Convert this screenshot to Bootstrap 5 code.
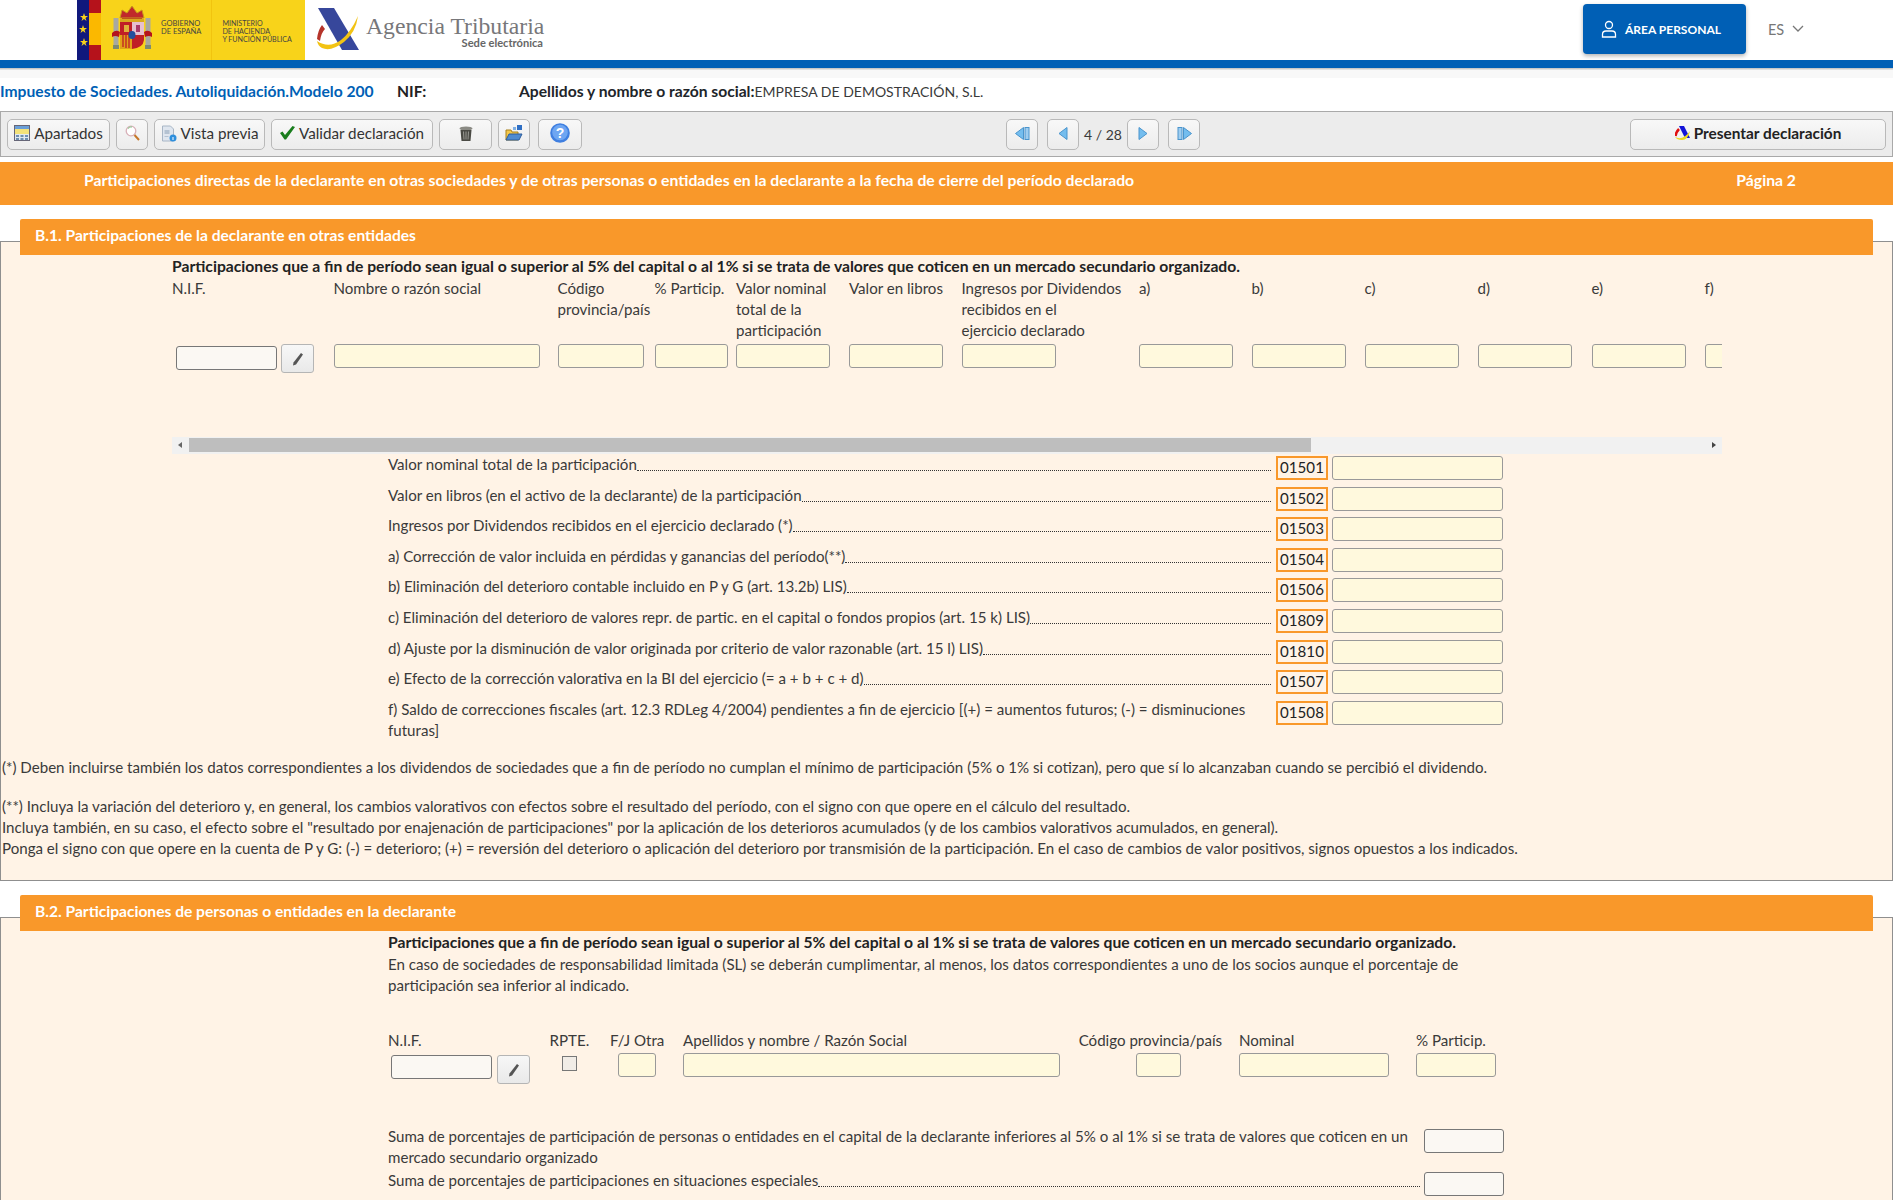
<!DOCTYPE html>
<html lang="es">
<head>
  <meta charset="UTF-8" />
  <title>Modelo 200</title>
  <link href="https://cdn.jsdelivr.net/npm/bootstrap@5.3.3/dist/css/bootstrap.min.css" rel="stylesheet">
  <style>
    html, body { overflow: hidden; }
    body { font-family: "Lato", "Liberation Sans", sans-serif; font-size: 15.1px; line-height: 21px; color: #3a3a3a; background: #fff; }
    .wrap { width: 1893px; height: 1200px; overflow: hidden; }

    .topbar { height: 60px; padding-left: 77px; }
    .gov-logo { width: 228px; height: 60px; background: #f8d31a; position: relative; }
    .gov-logo svg { flex: none; }
    .gov-txt { font-size: 7.5px; line-height: 8px; color: #444; padding-top: 20px; white-space: nowrap; flex: none; }
    .gov-esc { margin-left: 11px; margin-right: 9px; margin-top: 6px; }
    .gov-sep { border-left: 1px solid #f1c40f; padding-left: 10px; margin-left: 10px; }
    .gov-min { font-size: 7.1px; }
    .at-logo { margin: 8px 0 0 12px; }
    .at-txt { margin: 14px 0 0 7px; width: 178px; }
    .at-name { font-family: "Liberation Serif", serif; font-size: 23.7px; line-height: 24px; color: #77777a; white-space: nowrap; }
    .at-sede { font-size: 11.1px; line-height: 10px; font-weight: 700; color: #666; padding-right: 1px; }
    .btn-area { width: 163px; height: 50px; background: #005fb5; color: #fff; font-size: 12px; font-weight: 700; border-radius: 4px; box-shadow: 0 2px 4px rgba(0,0,0,.3); margin-top: 4px; padding-right: 7px; }
    .lang { font-size: 14.5px; color: #777; width: 147px; padding-left: 22px; }
    .blue-bar { height: 8px; background: #005fb5; }
    .shade { height: 10px; background: linear-gradient(#bbb, #f8f8f8 25%, #f8f8f8 100%); }

    .infobar { height: 33px; font-size: 15.65px; padding-bottom: 7px; }
    .tit-mod { color: #005fb5; font-weight: 700; width: 397px; white-space: nowrap; }
    .tit-nif { font-weight: 700; color: #222; width: 122px; }
    .tit-emp { font-size: 14px; }

    .toolb { height: 46px; background: #ececec; border: 1px solid #a9a9a9; padding: 0 6px; }
    .tb-btn { height: 31px; background: linear-gradient(#f8f8f8, #ececec); border: 1px solid #b9b9b9; border-radius: 5px; color: #333; font-size: 15.2px; white-space: nowrap; flex: none; padding-bottom: 2px; }
    .tb-apart { width: 103px; }
    .tb-sq { width: 32px; }
    .tb-vista { width: 111px; }
    .tb-valid { width: 162px; }
    .tb-del { width: 53px; }
    .tb-help { width: 44px; margin-left: 2px; }
    .tb-pre { width: 256px; color: #222; font-weight: 700; font-size: 15.4px; margin-left: auto; }
    .tb-count { width: 48px; font-size: 14px; }
    .gap-tb { gap: 6px; }
    .nav-pg { margin-left: 424px; }
    .nav-sep { margin-left: 9px; }

    .band { height: 43px; margin-top: 5px; background: #f9982a; color: #fff; font-weight: 700; font-size: 15.75px; padding: 0 97px 8px 84px; }
    .sec { position: relative; margin-top: 14px; }
    .sec-head { height: 36px; margin: 0 20px; background: #f9982a; color: #fff; font-weight: 700; font-size: 15.6px; padding: 0 0 3px 15px; border-radius: 2px 2px 0 0; position: relative; z-index: 1; }
    .sec-body { margin-top: -14px; padding-top: 14px; background: #fff3e6; border: 1px solid #8f8f8f; }
    .b1 { height: 640px; }
    .b2 { height: 300px; }

    .inp { display: block; height: 24px; background: #fff9dd; border: 1px solid #999; border-radius: 3px; flex: none; }
    .inp-w { background: #fbf8f3; border-color: #777; }
    .pen { width: 33px; height: 29px; background: linear-gradient(#f7f7f7, #e9e9e9); border: 1px solid #b5b5b5; border-radius: 3px; flex: none; }
    .b-txt { color: #222; font-weight: 700; font-size: 15.7px; white-space: nowrap; }

    .tb-wrap { margin-left: 171px; width: 1550px; }
    .cols { overflow: hidden; height: 160px; }
    .colx { flex: none; }
    .colx .cap { height: 67px; padding-top: 1px; }
    .nif-b1 { width: 101px; margin: 2px 0 0 4px; }
    .sbar { height: 17px; background: #f1f1f1; padding-top: 1px; }
    .sthumb { width: 1122px; height: 14px; background: #bebebe; }
    .s-arrow { width: 17px; height: 14px; flex: none; }

    .rows { margin: 2px 0 0 387px; width: 1115px; }
    .rowx { height: 30.6px; }
    .lbl-line { margin-top: -2px; min-width: 0; }
    .lbl { width: 887px; flex: none; margin-top: -2px; }
    .dots { flex: 1; border-bottom: 1px dotted #333; height: 17px; margin-right: 4px; }
    .cod { width: 52px; height: 24px; border: 2px solid #f9982a; background: #fff3e6; text-align: center; line-height: 19px; color: #222; flex: none; margin-left: 1px; margin-right: 4px; }
    .inp-c { width: 171px; height: 24px; }
    .notes { margin-top: 26px; padding-left: 1px; white-space: nowrap; }
    .notes p { margin-bottom: 18px; }

    .b2-main { margin-left: 387px; width: 1116px; }
    .b2-par { margin-top: 1px; }
    .b2-row { margin-top: 34px; height: 96px; }
    .b2-row > div { flex: none; }
    .c-nif { width: 161.600px; }
    .c-rpte { width: 60.400px; }
    .c-fj { width: 73px; }
    .c-ape { width: 395.700px; }
    .c-cod { width: 160.300px; }
    .c-nom { width: 177px; }
    .c-por { width: 88px; }
    .nif-b2 { width: 101px; margin: 4px 5px 0 3px; }
    .pen-b2 { margin-top: 4px; }
    .chk { display: block; width: 15px; height: 15px; margin: 5px 0 0 12px; background: #f1ece6; border: 1px solid #777; }
    .i-fj { width: 38px; margin: 2px 0 0 8px; }
    .i-ape { width: 377px; margin-top: 2px; }
    .i-cod { width: 45px; margin: 2px 0 0 57px; }
    .i-nom { width: 150px; margin-top: 2px; }
    .i-por { width: 80px; margin-top: 2px; }
    .suma-1 { height: 42px; }
    .suma-1 .tx { width: 1030px; }
    .suma-2 { margin-top: 2px; }
    .i-sum { width: 80px; height: 24px; margin-left: auto; margin-top: 3px; }
    .i-sum2 { width: 80px; height: 24px; margin-top: 2px; }
    .dots-s { height: 17px; margin-right: 4px; }
  </style>
</head>
<body>
<div class="wrap">

  <!-- cabecera -->
  <div class="topbar d-flex align-items-start">
    <div class="gov-logo d-flex">
      <svg width="24" height="60" viewBox="0 0 24 60">
        <rect width="12" height="60" fill="#10187c"/>
        <rect x="12" width="12" height="60" fill="#b5121b"/>
        <rect x="12" y="13" width="12" height="32" fill="#fbb800"/>
        <path d="M7 13l1 3h3l-2.500 2 1 3L7 19l-2.500 2 1-3L3 16h3zM6 25l1 3h3l-2.500 2 1 3L6 31l-2.500 2 1-3L2 28h3zM7 38l1 3h3l-2.500 2 1 3L7 44l-2.500 2 1-3L3 41h3z" fill="#f8d31a"/>
      </svg>
      <svg class="gov-esc" width="40" height="44" viewBox="0 0 40 44">
        <rect x="1.500" y="12" width="5" height="28" fill="#a8a8a0"/>
        <rect x="33.500" y="12" width="5" height="28" fill="#a8a8a0"/>
        <rect x="1" y="39" width="6" height="4" fill="#7e8a70"/>
        <rect x="33" y="39" width="6" height="4" fill="#7e8a70"/>
        <path d="M9 15q2-9 11-9t11 9z" fill="#b5121b"/>
        <path d="M8 12l2-8 5 3 5-7 5 7 5-3 2 8z" fill="#c0292a" stroke="#c99a1c" stroke-width="1"/>
        <rect x="8" y="13" width="24" height="3" fill="#d9a81f"/>
        <path d="M8 16h24v18q-1 8-12 9Q9 42 8 34z" fill="#c01f26"/>
        <rect x="20" y="16" width="12" height="13" fill="#e6c0d0"/>
        <rect x="8" y="29" width="12" height="14" fill="#e0a318"/>
        <path d="M11 29v12M14 29v13M17 29v13" stroke="#c01f26" stroke-width="1.300"/>
        <rect x="12" y="19" width="5" height="7" fill="#e0b03a"/>
        <rect x="24" y="19" width="4" height="7" fill="#a83a6a"/>
        <ellipse cx="20" cy="29" rx="3.500" ry="4" fill="#244f9c"/>
        <path d="M0 27q4-4 8-1l-1 5q-4-2-7 0zM40 27q-4-4-8-1l1 5q4-2 7 0z" fill="#b5121b"/>
      </svg>
      <div class="gov-txt">GOBIERNO<br>DE ESPAÑA</div>
      <div class="gov-txt gov-sep gov-min">MINISTERIO<br>DE HACIENDA<br>Y FUNCIÓN PÚBLICA</div>
    </div>
    <svg class="at-logo" width="42" height="42" viewBox="0 0 42 42">
      <path d="M1 0h16l25 42H25z" fill="#37479b"/>
      <path d="M5 17q-4 5-5 14l3 2q1-8 5-12z" fill="#b5342a"/>
      <path d="M0 33q12 8 24-1Q34 24 41 8q-2 16-14 26Q14 44 5 40 1 38 0 33z" fill="#f2c314"/>
    </svg>
    <div class="at-txt">
      <div class="at-name">Agencia Tributaria</div>
      <div class="at-sede text-end">Sede electrónica</div>
    </div>
    <div class="ms-auto d-flex">
      <div class="btn-area d-flex align-items-center justify-content-center gap-2">
        <svg width="16" height="18" viewBox="0 0 16 18" fill="none" stroke="#fff" stroke-width="1.300"><circle cx="8" cy="5" r="3.500"/><path d="M1.500 17v-2.500q0-3.500 3.500-3.500h6q3.500 0 3.500 3.500V17z"/></svg>
        ÁREA PERSONAL
      </div>
      <div class="lang d-flex align-items-center gap-2 mt-1">ES
        <svg width="12" height="8" viewBox="0 0 12 8" fill="none" stroke="#777" stroke-width="1.300"><path d="M1 1l5 5 5-5"/></svg>
      </div>
    </div>
  </div>
  <div class="blue-bar"></div>
  <div class="shade"></div>

  <!-- datos del modelo -->
  <div class="infobar d-flex align-items-center">
    <div class="tit-mod">Impuesto de Sociedades. Autoliquidación.Modelo 200</div>
    <div class="tit-nif">NIF:</div>
    <div class="text-nowrap"><b class="text-dark">Apellidos y nombre o razón social:</b><span class="tit-emp">EMPRESA DE DEMOSTRACIÓN, S.L.</span></div>
  </div>

  <!-- barra de herramientas -->
  <div class="toolb d-flex align-items-center">
    <div class="d-flex gap-tb">
      <div class="tb-btn tb-apart d-flex align-items-center justify-content-center gap-1">
        <svg width="16" height="16" viewBox="0 0 16 16"><rect x=".5" y=".5" width="15" height="15" fill="#dfe8f2" stroke="#667"/><rect x="1" y="1" width="14" height="3" fill="#6a9fd8"/><rect x="1" y="4" width="14" height="5" fill="#f3e27a"/><rect x="2" y="10" width="3" height="2" fill="#6f8fb0"/><rect x="6.500" y="10" width="3" height="2" fill="#6f8fb0"/><rect x="11" y="10" width="3" height="2" fill="#6f8fb0"/><rect x="2" y="13" width="3" height="2" fill="#6f8fb0"/><rect x="6.500" y="13" width="3" height="2" fill="#6f8fb0"/><rect x="11" y="13" width="3" height="2" fill="#6f8fb0"/></svg>
        Apartados
      </div>
      <div class="tb-btn tb-sq d-flex align-items-center justify-content-center">
        <svg width="15" height="16" viewBox="0 0 15 16" fill="none"><circle cx="6" cy="6" r="4.800" stroke="#d8b0b8" stroke-width="1.300" fill="#fff"/><path d="M3 3.500a4 4 0 0 1 4-1.500" stroke="#9cc79a" stroke-width="1.300"/><path d="M9.500 10l4.500 5" stroke="#c6772a" stroke-width="2"/></svg>
      </div>
      <div class="tb-btn tb-vista d-flex align-items-center justify-content-center gap-1">
        <svg width="16" height="17" viewBox="0 0 16 17"><path d="M1.500 1h8l3 3v12h-11z" fill="#dfe6ef" stroke="#a8b6c6"/><circle cx="12" cy="13" r="3.500" fill="#2f8fdc"/><rect x="3.500" y="5" width="5" height="4" fill="#b4c2d2"/><rect x="3.500" y="11" width="4" height="1" fill="#b4c2d2"/><rect x="11.500" y="12" width="1" height="3" fill="#fff"/></svg>
        Vista previa
      </div>
      <div class="tb-btn tb-valid d-flex align-items-center justify-content-center gap-1">
        <svg width="15" height="14" viewBox="0 0 15 14"><path d="M0 7l2.500-1.500L5 9l7.500-9L15 1 6 13.500H4.500z" fill="#197d1d"/></svg>
        Validar declaración
      </div>
      <div class="tb-btn tb-del d-flex align-items-center justify-content-center">
        <svg width="14" height="15" viewBox="0 0 14 15"><ellipse cx="7" cy="2.500" rx="6.500" ry="2" fill="#8a8a84"/><path d="M1.500 4h11l-1 11h-9z" fill="#4a4a44"/><path d="M4.500 5.500l.5 8M7 5.500v8M9.500 5.500l-.5 8" stroke="#9a9a94"/></svg>
      </div>
      <div class="tb-btn tb-sq d-flex align-items-center justify-content-center">
        <svg width="18" height="16" viewBox="0 0 18 16"><path d="M1 5h5l1 2h6v8H1z" fill="#f5c84a" stroke="#a8801c"/><path d="M1 15l3-6h13l-3 6z" fill="#4f8bd0" stroke="#2c5c9c"/><rect x="12" y="0" width="5" height="5" fill="#2f6fc4"/><rect x="8" y="2" width="3" height="3" fill="#7fb0e4"/></svg>
      </div>
      <div class="tb-btn tb-help d-flex align-items-center justify-content-center">
        <svg width="20" height="20" viewBox="0 0 20 20"><circle cx="10" cy="10" r="9.800" fill="#3f7fe0"/><circle cx="10" cy="9.500" r="7.800" fill="#6ea6f2"/><text x="10" y="15" font-size="14" font-weight="700" text-anchor="middle" fill="#fff" font-family="Liberation Sans, sans-serif">?</text></svg>
      </div>
    </div>
    <div class="d-flex align-items-center nav-pg">
      <div class="tb-btn tb-sq d-flex align-items-center justify-content-center">
        <svg width="15" height="13" viewBox="0 0 15 13"><path d="M8.500 .5v12L.5 6.500z" fill="#74bdee" stroke="#4a94cc"/><rect x="10" y=".5" width="4" height="12" fill="#9ecdf0" stroke="#4a94cc"/></svg>
      </div>
      <div class="tb-btn tb-sq d-flex align-items-center justify-content-center nav-sep">
        <svg width="10" height="13" viewBox="0 0 10 13"><path d="M9 .5v12L1 6.500z" fill="#74bdee" stroke="#4a94cc"/></svg>
      </div>
      <div class="tb-count text-center">4 / 28</div>
      <div class="tb-btn tb-sq d-flex align-items-center justify-content-center">
        <svg width="10" height="13" viewBox="0 0 10 13"><path d="M1 .5v12l8-6z" fill="#74bdee" stroke="#4a94cc"/></svg>
      </div>
      <div class="tb-btn tb-sq d-flex align-items-center justify-content-center nav-sep">
        <svg width="15" height="13" viewBox="0 0 15 13"><rect x="1" y=".5" width="4" height="12" fill="#9ecdf0" stroke="#4a94cc"/><path d="M6.500 .5v12l8-6z" fill="#74bdee" stroke="#4a94cc"/></svg>
      </div>
    </div>
    <div class="tb-btn tb-pre d-flex align-items-center justify-content-center gap-1">
      <svg width="15" height="14" viewBox="0 0 15 14"><path d="M4 0h5l6 12h-5z" fill="#1414d8"/><path d="M4 3Q1 6 .5 10" stroke="#e01010" stroke-width="2.500" fill="none"/><path d="M0 11q8 4 15-6-2 9-8 9-5 0-7-3z" fill="#ecd820"/></svg>
      Presentar declaración
    </div>
  </div>

  <div class="band d-flex align-items-center justify-content-between">
    <span>Participaciones directas de la declarante en otras sociedades y de otras personas o entidades en la declarante a la fecha de cierre del período declarado</span>
    <span>Página 2</span>
  </div>

  <!-- B.1 -->
  <div class="sec">
    <div class="sec-head d-flex align-items-center">B.1. Participaciones de la declarante en otras entidades</div>
    <div class="sec-body b1">
      <div class="tb-wrap">
        <div class="b-txt">Participaciones que a fin de período sean igual o superior al 5% del capital o al 1% si se trata de valores que coticen en un mercado secundario organizado.</div>
        <div class="cols d-flex" id="colsB1"></div>
        <div class="sbar d-flex">
          <svg class="s-arrow" viewBox="0 0 17 14"><path d="M10 4v6L6 7z" fill="#666"/></svg>
          <div class="sthumb"></div>
          <svg class="s-arrow ms-auto" viewBox="0 0 17 14"><path d="M7 4v6l4-3z" fill="#444"/></svg>
        </div>
      </div>
      <div class="rows" id="rowsB1"></div>
      <div class="notes">
        <p>(*) Deben incluirse también los datos correspondientes a los dividendos de sociedades que a fin de período no cumplan el mínimo de participación (5% o 1% si cotizan), pero que sí lo alcanzaban cuando se percibió el dividendo.</p>
        <div>(**) Incluya la variación del deterioro y, en general, los cambios valorativos con efectos sobre el resultado del período, con el signo con que opere en el cálculo del resultado.</div>
        <div>Incluya también, en su caso, el efecto sobre el "resultado por enajenación de participaciones" por la aplicación de los deterioros acumulados (y de los cambios valorativos acumulados, en general).</div>
        <div>Ponga el signo con que opere en la cuenta de P y G: (-) = deterioro; (+) = reversión del deterioro o aplicación del deterioro por transmisión de la participación. En el caso de cambios de valor positivos, signos opuestos a los indicados.</div>
      </div>
    </div>
  </div>

  <!-- B.2 -->
  <div class="sec">
    <div class="sec-head d-flex align-items-center">B.2. Participaciones de personas o entidades en la declarante</div>
    <div class="sec-body b2">
      <div class="b2-main">
        <div class="b-txt">Participaciones que a fin de período sean igual o superior al 5% del capital o al 1% si se trata de valores que coticen en un mercado secundario organizado.</div>
        <div class="b2-par">En caso de sociedades de responsabilidad limitada (SL) se deberán cumplimentar, al menos, los datos correspondientes a uno de los socios aunque el porcentaje de participación sea inferior al indicado.</div>
        <div class="b2-row d-flex">
          <div class="c-nif">N.I.F.
            <div class="d-flex"><div class="inp inp-w nif-b2"></div><div class="pen pen-b2 d-flex align-items-center justify-content-center"><svg width="12" height="14" viewBox="0 0 12 14"><path d="M9 1l2 1.500-7 10-3 1 .5-3z" fill="#555"/></svg></div></div>
          </div>
          <div class="c-rpte">RPTE.<div class="chk"></div></div>
          <div class="c-fj">F/J Otra<div class="inp i-fj"></div></div>
          <div class="c-ape">Apellidos y nombre / Razón Social<div class="inp i-ape"></div></div>
          <div class="c-cod text-nowrap">Código provincia/país<div class="inp i-cod"></div></div>
          <div class="c-nom">Nominal<div class="inp i-nom"></div></div>
          <div class="c-por text-nowrap">% Particip.<div class="inp i-por"></div></div>
        </div>
        <div class="suma-1 d-flex">
          <div class="tx">Suma de porcentajes de participación de personas o entidades en el capital de la declarante inferiores al 5% o al 1% si se trata de valores que coticen en un mercado secundario organizado</div>
          <div class="inp inp-w i-sum"></div>
        </div>
        <div class="suma-2 d-flex align-items-start">
          <span class="text-nowrap">Suma de porcentajes de participaciones en situaciones especiales</span>
          <span class="dots dots-s"></span>
          <div class="inp inp-w i-sum2"></div>
        </div>
      </div>
    </div>
  </div>
</div>

<script>
  // columnas de la tabla B.1: texto, ancho de columna, ancho del campo
  var colsB1 = [
    ["N.I.F.", 161.500, 0], ["Nombre o razón social", 224, 206], ["Código provincia/país", 97, 86],
    ["% Particip.", 81.500, 73], ["Valor nominal<br>total de la<br>participación", 113, 94], ["Valor en libros", 112.500, 94],
    ["Ingresos por Dividendos<br>recibidos en el<br>ejercicio declarado", 177.500, 94], ["a)", 112.500, 94],
    ["b)", 113, 94], ["c)", 113, 94], ["d)", 114, 94], ["e)", 113, 94], ["f)", 113, 94]
  ];
  var html = "";
  colsB1.forEach(function (c, i) {
    html += '<div class="colx" style="width:' + c[1] + 'px"><div class="cap">' + c[0] + '</div>';
    if (i == 0) {
      html += '<div class="d-flex gap-1"><div class="inp inp-w nif-b1"></div><div class="pen d-flex align-items-center justify-content-center"><svg width="12" height="14" viewBox="0 0 12 14"><path d="M9 1l2 1.500-7 10-3 1 .5-3z" fill="#555"/></svg></div></div>';
    } else {
      html += '<div class="inp" style="width:' + c[2] + 'px"></div>';
    }
    html += '</div>';
  });
  document.getElementById("colsB1").innerHTML = html;

  var rowsB1 = [
    ["Valor nominal total de la participación", "01501"],
    ["Valor en libros (en el activo de la declarante) de la participación", "01502"],
    ["Ingresos por Dividendos recibidos en el ejercicio declarado (*)", "01503"],
    ["a) Corrección de valor incluida en pérdidas y ganancias del período(**)", "01504"],
    ["b) Eliminación del deterioro contable incluido en P y G (art. 13.2b) LIS)", "01506"],
    ["c) Eliminación del deterioro de valores repr. de partic. en el capital o fondos propios (art. 15 k) LIS)", "01809"],
    ["d) Ajuste por la disminución de valor originada por criterio de valor razonable (art. 15 l) LIS)", "01810"],
    ["e) Efecto de la corrección valorativa en la BI del ejercicio (= a + b + c + d)", "01507"],
    ["f) Saldo de correcciones fiscales (art. 12.3 RDLeg 4/2004) pendientes a fin de ejercicio [(+) = aumentos futuros; (-) = disminuciones futuras]", "01508"]
  ];
  document.getElementById("rowsB1").innerHTML = rowsB1.map(function (r, i) {
    var last = i == rowsB1.length - 1;
    return '<div class="rowx d-flex align-items-start">' +
      (last ? '<div class="lbl">' + r[0] + '</div>'
            : '<div class="d-flex flex-grow-1 lbl-line"><span class="text-nowrap">' + r[0] + '</span><span class="dots"></span></div>') +
      '<div class="cod">' + r[1] + '</div><div class="inp inp-c"></div></div>';
  }).join("");
</script>
<script src="https://cdn.jsdelivr.net/npm/bootstrap@5.3.3/dist/js/bootstrap.bundle.min.js"></script>
</body>
</html>
